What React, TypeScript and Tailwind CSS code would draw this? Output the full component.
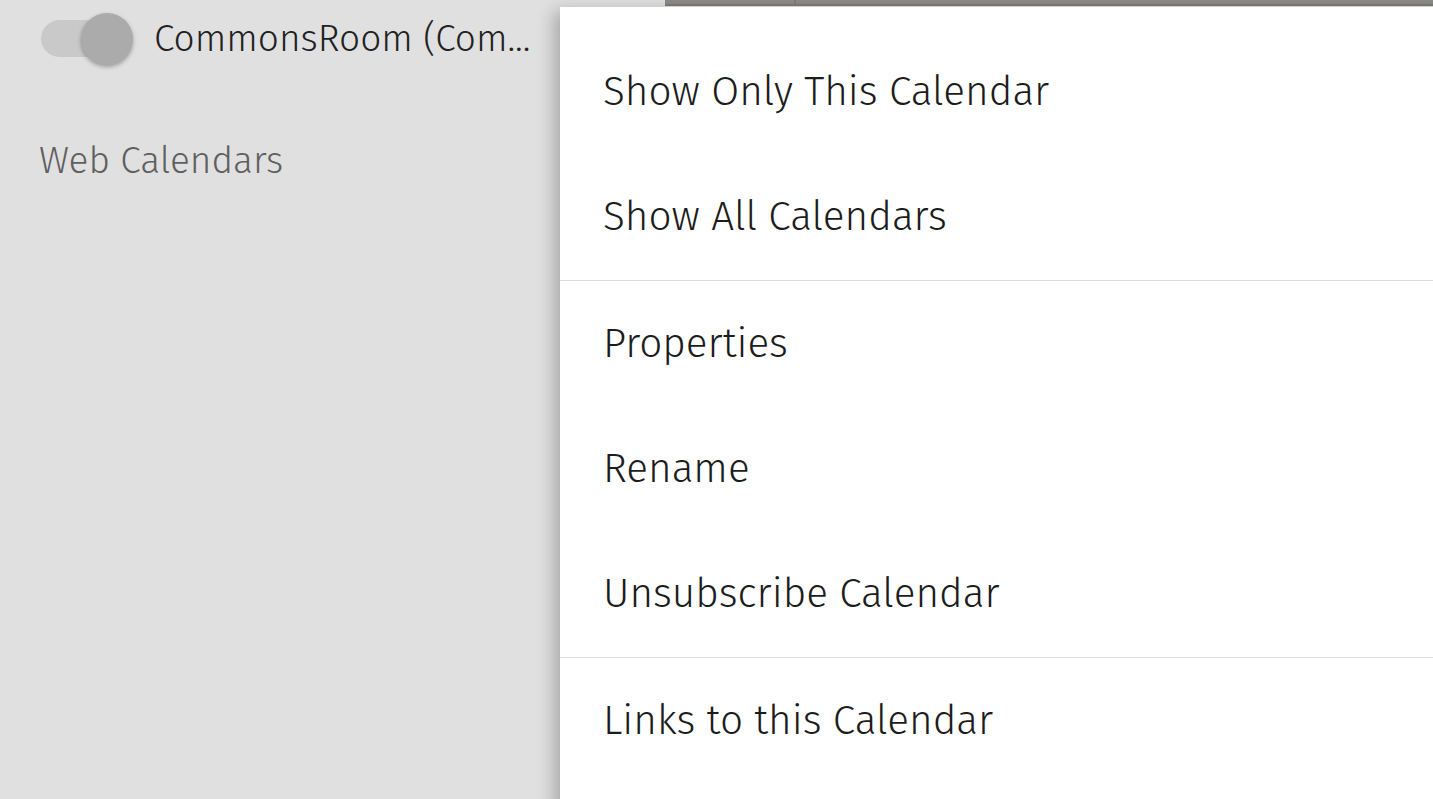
const groups: string[][] = [
  ["Show Only This Calendar", "Show All Calendars"],
  ["Properties", "Rename", "Unsubscribe Calendar"],
  ["Links to this Calendar"],
];

function Toggle() {
  return (
    <div className="relative w-[92px] h-[52px] shrink-0">
      <div className="absolute left-0 top-[7px] w-[62px] h-[37px] rounded-full bg-[#c9c9c9]" />
      <div className="absolute left-[40px] top-0 w-[52px] h-[52px] rounded-full bg-[#ababab] shadow-[0_2px_4px_rgba(0,0,0,0.3)]" />
    </div>
  );
}

export default function App() {
  return (
    <div
      className="relative w-[1433px] h-[799px] overflow-hidden bg-[#e0e0e0] text-[#212121]"
      style={{ fontFamily: '"Fira Sans", "Open Sans", sans-serif' }}
    >
      <div className="flex h-full">
        <aside className="w-[665px] shrink-0 bg-[#e0e0e0]">
          <div className="flex items-center gap-[21px] pl-[41px] pt-[13px]">
            <Toggle />
            <span className="text-[37px] font-light leading-none whitespace-nowrap pb-[2px]">
              CommonsRoom (Com...
            </span>
          </div>
          <div className="pl-[39px] pt-[77px] text-[37px] font-light leading-none text-[#5f5f5f]">
            Web Calendars
          </div>
        </aside>
        <main className="flex-1">
          <div className="flex h-[6px] bg-[#8c8c8c] border-b-2 border-[#837d70]">
            <div className="w-[131px] border-r-2 border-[#837d70]" />
          </div>
        </main>
      </div>

      <div className="absolute left-[560px] top-[7px] w-[900px] h-[820px] bg-white shadow-[-6px_4px_16px_rgba(0,0,0,0.25)] pt-[23px]">
        {groups.map((items, gi) => (
          <div key={gi} className={gi > 0 ? "border-t border-[#dcdcdc] pt-[1px]" : ""}>
            {items.map((label) => (
              <div
                key={label}
                className="flex items-center h-[125px] pl-[43px] text-[40.5px] font-light text-[#1c1c1c]"
              >
                {label}
              </div>
            ))}
          </div>
        ))}
      </div>
    </div>
  );
}
